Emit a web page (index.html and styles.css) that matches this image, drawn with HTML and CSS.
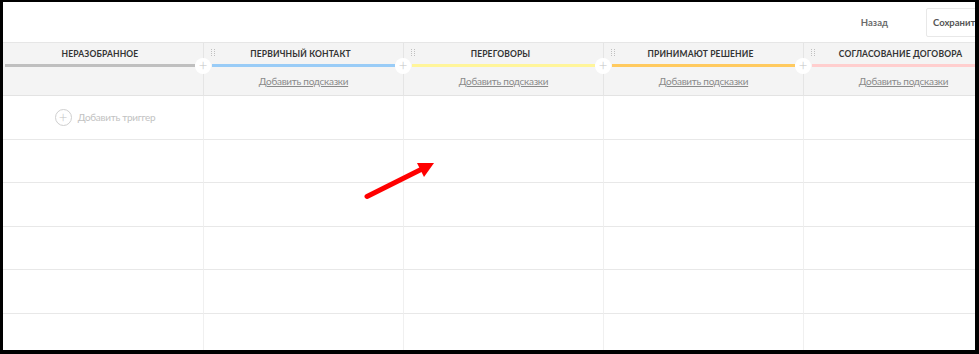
FILE: index.html
```html
<!DOCTYPE html>
<html lang="ru">
<head>
    <meta charset="UTF-8">
    <title>Воронка продаж</title>
    <link rel="stylesheet" href="styles.css">
</head>
<body>
    <div class="frame">
        <div class="topbar">
            <span class="back">Назад</span>
            <span class="save">Сохранить</span>
        </div>

        <div class="board">
            <div class="stage">
                <div class="stage-title">Неразобранное</div>
                <div class="stage-line line-gray first"></div>
                <div class="stage-hint"></div>
                <span class="add-stage">+</span>
            </div>
            <div class="stage">
                <span class="drag"><i></i><i></i><i></i><i></i><i></i><i></i><i></i><i></i></span>
                <div class="stage-title">Первичный контакт</div>
                <div class="stage-line line-blue"></div>
                <div class="stage-hint"><a href="#">Добавить подсказки</a></div>
                <span class="add-stage">+</span>
            </div>
            <div class="stage">
                <span class="drag"><i></i><i></i><i></i><i></i><i></i><i></i><i></i><i></i></span>
                <div class="stage-title">Переговоры</div>
                <div class="stage-line line-yellow"></div>
                <div class="stage-hint"><a href="#">Добавить подсказки</a></div>
                <span class="add-stage">+</span>
            </div>
            <div class="stage">
                <span class="drag"><i></i><i></i><i></i><i></i><i></i><i></i><i></i><i></i></span>
                <div class="stage-title">Принимают решение</div>
                <div class="stage-line line-orange"></div>
                <div class="stage-hint"><a href="#">Добавить подсказки</a></div>
                <span class="add-stage">+</span>
            </div>
            <div class="stage">
                <span class="drag"><i></i><i></i><i></i><i></i><i></i><i></i><i></i><i></i></span>
                <div class="stage-title">Согласование договора</div>
                <div class="stage-line line-pink"></div>
                <div class="stage-hint"><a href="#">Добавить подсказки</a></div>
            </div>

            <!-- строки триггеров -->
            <div class="cell"><span class="add-trigger"><span class="circle">+</span>Добавить триггер</span></div>
            <div class="cell"></div><div class="cell"></div><div class="cell"></div><div class="cell"></div>
            <div class="cell"></div><div class="cell"></div><div class="cell"></div><div class="cell"></div><div class="cell"></div>
            <div class="cell"></div><div class="cell"></div><div class="cell"></div><div class="cell"></div><div class="cell"></div>
            <div class="cell"></div><div class="cell"></div><div class="cell"></div><div class="cell"></div><div class="cell"></div>
            <div class="cell"></div><div class="cell"></div><div class="cell"></div><div class="cell"></div><div class="cell"></div>
            <div class="cell"></div><div class="cell"></div><div class="cell"></div><div class="cell"></div><div class="cell"></div>
        </div>

        <svg class="arrow" width="979" height="354" viewBox="0 0 979 354">
            <line x1="367" y1="196.5" x2="422" y2="169" stroke="#f00" stroke-width="5" stroke-linecap="round"/>
            <polygon points="434,163 417,163 424,177" fill="#f00"/>
        </svg>
    </div>
</body>
</html>
```

FILE: styles.css
```css
body {
    margin: 0;
    font-family: Lato, Roboto, "Liberation Sans", Arial, sans-serif;
    background: #fff;
}
.frame {
    position: relative;
    width: 979px;
    height: 354px;
    box-sizing: border-box;
    border-style: solid;
    border-color: #000;
    border-width: 2px 4px 4px 3px;
    overflow: hidden;
    background: #fff;
}
.topbar {
    height: 40px;
    display: flex;
    align-items: center;
    justify-content: flex-end;
    border-bottom: 1px solid #e6e6e6;
    font-size: 9.5px;
    font-weight: bold;
    color: #6b6b6b;
}
.back {
    margin-right: 38px;
}
.save {
    height: 27px;
    line-height: 27px;
    padding: 0 8px 0 6px;
    margin-right: -14px;
    border: 1px solid #e8e8e8;
    border-radius: 2px;
    color: #555;
}
.board {
    display: grid;
    grid-template-columns: 201px repeat(4, 200px);
    grid-template-rows: 53px repeat(6, 43.5px);
}
.stage {
    position: relative;
    background: #f4f4f4;
    border-right: 1px solid #e5e5e5;
    border-bottom: 1px solid #e3e3e3;
}
.stage-title {
    height: 20px;
    line-height: 20px;
    margin-top: 1px;
    padding-right: 6px;
    text-align: center;
    text-transform: uppercase;
    font-size: 8.5px;
    font-weight: bold;
    letter-spacing: 0.15px;
    color: #333;
}
.stage-line {
    height: 3px;
    margin: 0 8px;
}
.stage-line.first {
    margin-left: 2px;
}
.line-gray { background: #bfbfbf; }
.line-blue { background: #99ccf7; }
.line-yellow { background: #fff59a; }
.line-orange { background: #ffca5f; }
.line-pink { background: #ffcece; }
.stage-hint {
    height: 28px;
    line-height: 28px;
    text-align: center;
    font-size: 10px;
    letter-spacing: -0.3px;
}
.stage-hint a {
    color: #8a8a8a;
    text-decoration: underline;
}
.add-stage {
    position: absolute;
    right: -8px;
    top: 15px;
    z-index: 2;
    width: 16px;
    height: 16px;
    border-radius: 50%;
    background: #fff;
    color: #c4c4c4;
    font-size: 15px;
    font-weight: 300;
    line-height: 15px;
    text-align: center;
}
.drag {
    position: absolute;
    left: 7px;
    top: 6px;
    display: grid;
    grid-template-columns: 1px 1px;
    gap: 1px 2px;
}
.drag i {
    width: 1px;
    height: 1px;
    background: #c0c0c0;
}
.cell {
    border-right: 1px solid #f0f0f0;
    border-bottom: 1px solid #e8e8e8;
    display: flex;
    align-items: center;
    justify-content: center;
}
.add-trigger {
    display: flex;
    align-items: center;
    font-size: 10px;
    letter-spacing: -0.3px;
    color: #c2c2c2;
    margin-left: 4px;
}
.circle {
    width: 15px;
    height: 15px;
    border: 1px solid #cfcfcf;
    border-radius: 50%;
    margin-right: 6px;
    font-size: 15px;
    line-height: 14px;
    text-align: center;
    color: #c4c4c4;
    font-weight: 300;
    letter-spacing: 0;
}
.arrow {
    position: absolute;
    left: -3px;
    top: -2px;
    pointer-events: none;
}
```
